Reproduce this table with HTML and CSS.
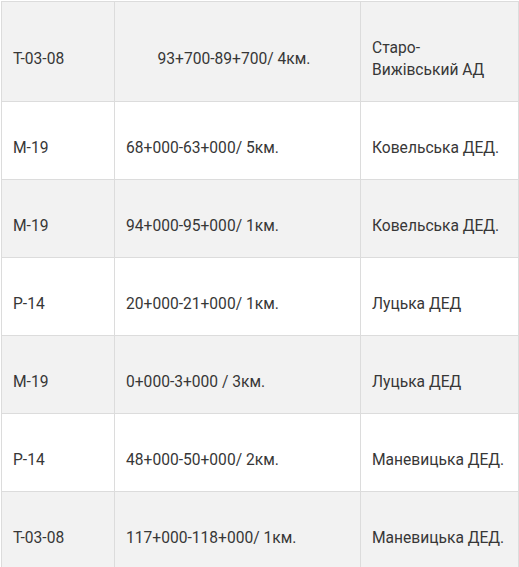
FILE: index.html
```html
<!DOCTYPE html>
<html lang="uk">
<head>
<meta charset="utf-8">
<link rel="stylesheet" href="styles.css">
</head>
<body>
<table class="roads">
  <colgroup>
    <col class="c1"><col class="c2"><col class="c3">
  </colgroup>
  <tbody>
    <tr class="alt"><td>Т-03-08</td><td class="center">93+700-89+700/ 4км.</td><td>Старо-<br>Вижівський АД</td></tr>
    <tr><td>М-19</td><td>68+000-63+000/ 5км.</td><td>Ковельська ДЕД.</td></tr>
    <tr class="alt"><td>М-19</td><td>94+000-95+000/ 1км.</td><td>Ковельська ДЕД.</td></tr>
    <tr><td>Р-14</td><td>20+000-21+000/ 1км.</td><td>Луцька ДЕД</td></tr>
    <tr class="alt"><td>М-19</td><td>0+000-3+000 / 3км.</td><td>Луцька ДЕД</td></tr>
    <tr><td>Р-14</td><td>48+000-50+000/ 2км.</td><td>Маневицька ДЕД.</td></tr>
    <tr class="alt"><td>Т-03-08</td><td>117+000-118+000/ 1км.</td><td>Маневицька ДЕД.</td></tr>
  </tbody>
</table>
</body>
</html>
```
FILE: styles.css
```css
html, body {
  margin: 0;
  padding: 0;
  background: #fff;
}
body {
  padding: 1px 0 0 1px;
  font-family: Roboto, "Noto Sans", sans-serif;
  font-size: 15.6px;
  color: #373737;
}
.roads {
  border-collapse: collapse;
  table-layout: fixed;
  width: 517px;
}
.c1 { width: 113px; }
.c2 { width: 246px; }
.c3 { width: 158px; }
.roads td {
  border: 1px solid #dcdcdc;
  padding: 35px 4px 20px 11px;
  line-height: 22px;
  vertical-align: middle;
  text-align: left;
}
.roads td.center {
  text-align: center;
  padding-right: 18px;
}
.roads tr.alt td {
  background: #f2f2f2;
}
```
